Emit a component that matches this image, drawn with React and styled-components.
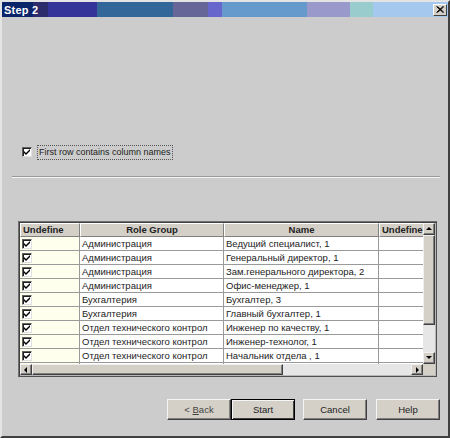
import React from "react";
import styled, { createGlobalStyle } from "styled-components";

const Global = createGlobalStyle`
  html, body { margin: 0; padding: 0; background: #cccccc; }
  * { box-sizing: border-box; }
`;

const Window = styled.div`
  width: 450px;
  height: 438px;
  background: #cccccc;
  border-style: solid;
  border-width: 2px;
  border-color: #e4e4e4 #404040 #404040 #e4e4e4;
  display: flex;
  flex-direction: column;
  font-family: "Liberation Sans", Arial, sans-serif;
  overflow: hidden;
`;

const TitleBar = styled.div`
  height: 15px;
  flex: none;
  display: flex;
  align-items: center;
  justify-content: space-between;
  padding: 0 1px 0 2px;
  background: linear-gradient(
    to right,
    #0a246a 0px, #0a246a 31px,
    #2c2c6c 31px, #2c2c6c 46px,
    #333399 46px, #333399 95px,
    #336699 95px, #336699 171px,
    #666699 171px, #666699 206px,
    #6666cc 206px, #6666cc 220px,
    #6699cc 220px, #6699cc 305px,
    #9999cc 305px, #9999cc 348px,
    #99cccc 348px, #99cccc 371px,
    #a4c8ee 371px, #a4c8ee 100%
  );
`;

const Title = styled.span`
  color: #ffffff;
  font-weight: bold;
  font-size: 11px;
  letter-spacing: 0.2px;
`;

const CloseButton = styled.div`
  width: 14px;
  height: 12px;
  background: #d4d0c8;
  border-style: solid;
  border-width: 1px;
  border-color: #ffffff #404040 #404040 #ffffff;
  display: flex;
  align-items: center;
  justify-content: center;
`;

const Body = styled.div`
  flex: 1;
  display: flex;
  flex-direction: column;
  padding: 0 8px 0 16px;
`;

const CheckRow = styled.div`
  margin-top: 128px;
  display: flex;
  align-items: center;
  gap: 5px;
  padding-left: 4px;
  height: 14px;
`;

const Box = styled.span`
  width: 10px;
  height: 10px;
  flex: none;
  background: #ffffff;
  border-style: solid;
  border-width: 1px;
  border-color: #606060 #e0e0e0 #e0e0e0 #606060;
  box-shadow: inset 1px 1px 0 #202020;
  display: flex;
  align-items: center;
  justify-content: center;
`;

const Label = styled.span`
  font-size: 9px;
  color: #222;
  border: 1px dotted #555;
  padding: 1px 1px;
  line-height: 11px;
`;

const Separator = styled.div`
  margin: 17px 0 0 -6px;
  height: 2px;
  border-top: 1px solid #9a9a9a;
  border-bottom: 1px solid #f4f4f4;
`;

const Frame = styled.div`
  margin-top: 43px;
  width: 419px;
  height: 156px;
  border-style: solid;
  border-width: 1px;
  border-color: #707070 #505050 #505050 #707070;
  box-shadow: inset 1px 1px 0 #404040, inset -1px -1px 0 #b8b8b8;
  padding: 1px;
  display: grid;
  grid-template-columns: 403px 12px;
  grid-template-rows: 141px 11px;
`;

const Viewport = styled.div`
  overflow: hidden;
  background: #cccccc;
`;

const Grid = styled.div`
  display: grid;
  grid-template-columns: 60px 144px 155px 60px;
  width: 419px;
`;

const HeadCell = styled.div`
  height: 14px;
  background: #d4d0c8;
  border-style: solid;
  border-width: 1px;
  border-color: #ffffff #808080 #808080 #ffffff;
  font-size: 9.5px;
  font-weight: bold;
  color: #222;
  line-height: 12px;
  text-align: ${(p) => (p.$left ? "left" : "center")};
  padding-left: ${(p) => (p.$left ? "2px" : "0")};
  white-space: nowrap;
  overflow: hidden;
`;

const Cell = styled.div`
  height: 14px;
  background: ${(p) => (p.$check ? "#ffffee" : "#ffffff")};
  border-right: 1px solid #9a9a9a;
  border-bottom: 1px solid #9a9a9a;
  font-size: 9.5px;
  color: #222;
  line-height: 13px;
  padding-left: 2px;
  white-space: nowrap;
  overflow: hidden;
  display: flex;
  align-items: center;
`;

const VScroll = styled.div`
  display: flex;
  flex-direction: column;
  background: #e6e6e6;
`;

const HScroll = styled.div`
  display: flex;
  background: #e6e6e6;
`;

const Corner = styled.div`
  background: #d4d0c8;
`;

const ArrowBtn = styled.div`
  width: ${(p) => p.$w || 12}px;
  height: ${(p) => p.$h || 12}px;
  flex: none;
  background: #d4d0c8;
  border-style: solid;
  border-width: 1px;
  border-color: #f0f0f0 #404040 #404040 #f0f0f0;
  box-shadow: inset -1px -1px 0 #808080;
  display: flex;
  align-items: center;
  justify-content: center;
`;

const Thumb = styled.div`
  flex: none;
  width: ${(p) => (p.$w ? `${p.$w}px` : "auto")};
  height: ${(p) => (p.$h ? `${p.$h}px` : "auto")};
  background: #d4d0c8;
  border-style: solid;
  border-width: 1px;
  border-color: #f0f0f0 #404040 #404040 #f0f0f0;
  box-shadow: inset -1px -1px 0 #808080;
`;

const Track = styled.div`
  flex: 1;
`;

const ButtonRow = styled.div`
  margin-top: 22px;
  display: flex;
  justify-content: flex-end;
`;

const Button = styled.div`
  width: ${(p) => p.$w || 64}px;
  height: 21px;
  margin-left: ${(p) => p.$gap || 0}px;
  background: #d4d0c8;
  border-style: solid;
  border-width: 1px;
  border-color: ${(p) => (p.$default ? "#000" : "#f4f4f4 #404040 #404040 #f4f4f4")};
  box-shadow: ${(p) =>
    p.$default
      ? "inset 1px 1px 0 #f4f4f4, inset -1px -1px 0 #404040"
      : "inset -1px -1px 0 #808080"};
  display: flex;
  align-items: center;
  justify-content: center;
  font-size: 9.5px;
  color: ${(p) => (p.$dim ? "#444" : "#222")};
`;

const Check = () => (
  <svg width="8" height="8" viewBox="0 0 8 8">
    <path d="M1 3 L3 5 L7 1 L7 3 L3 7 L1 5 Z" fill="#000" />
  </svg>
);

const Tri = ({ dir }) => {
  const d = {
    up: "M1 5 L4 2 L7 5 Z",
    down: "M1 2 L4 5 L7 2 Z",
    left: "M5 1 L2 4 L5 7 Z",
    right: "M3 1 L6 4 L3 7 Z",
  }[dir];
  return (
    <svg width="8" height="8" viewBox="0 0 8 8">
      <path d={d} fill="#000" />
    </svg>
  );
};

const rows = [
  ["Администрация", "Ведущий специалист, 1"],
  ["Администрация", "Генеральный директор, 1"],
  ["Администрация", "Зам.генерального директора, 2"],
  ["Администрация", "Офис-менеджер, 1"],
  ["Бухгалтерия", "Бухгалтер, 3"],
  ["Бухгалтерия", "Главный бухгалтер, 1"],
  ["Отдел технического контрол", "Инженер по качеству, 1"],
  ["Отдел технического контрол", "Инженер-технолог, 1"],
  ["Отдел технического контрол", "Начальник отдела , 1"],
  ["", ""],
];

export default function App() {
  return (
    <>
      <Global />
      <Window>
        <TitleBar>
          <Title>Step 2</Title>
          <CloseButton>
            <svg width="8" height="7" viewBox="0 0 8 7">
              <path d="M0.5 0.5 L7 6.5 M7 0.5 L0.5 6.5 M1.5 0.5 L8 6.5 M8 0.5 L1.5 6.5" stroke="#000" strokeWidth="1" />
            </svg>
          </CloseButton>
        </TitleBar>
        <Body>
          <CheckRow>
            <Box>
              <Check />
            </Box>
            <Label>First row contains column names</Label>
          </CheckRow>
          <Separator />
          <Frame>
            <Viewport>
              <Grid>
                <HeadCell $left>Undefine</HeadCell>
                <HeadCell>Role Group</HeadCell>
                <HeadCell>Name</HeadCell>
                <HeadCell $left>Undefine</HeadCell>
                {rows.map(([g, n], i) => (
                  <React.Fragment key={i}>
                    <Cell $check>
                      <Box>
                        <Check />
                      </Box>
                    </Cell>
                    <Cell>{g}</Cell>
                    <Cell>{n}</Cell>
                    <Cell />
                  </React.Fragment>
                ))}
              </Grid>
            </Viewport>
            <VScroll>
              <ArrowBtn>
                <Tri dir="up" />
              </ArrowBtn>
              <Thumb $h={90} />
              <Track />
              <ArrowBtn>
                <Tri dir="down" />
              </ArrowBtn>
            </VScroll>
            <HScroll>
              <ArrowBtn $h={11}>
                <Tri dir="left" />
              </ArrowBtn>
              <Thumb $w={251} />
              <Track />
              <ArrowBtn $h={11}>
                <Tri dir="right" />
              </ArrowBtn>
            </HScroll>
            <Corner />
          </Frame>
          <ButtonRow>
            <Button $dim>
              &lt;&nbsp;<u>B</u>ack
            </Button>
            <Button $default>Start</Button>
            <Button $gap={8}>Cancel</Button>
            <Button $gap={9}>Help</Button>
          </ButtonRow>
        </Body>
      </Window>
    </>
  );
}
